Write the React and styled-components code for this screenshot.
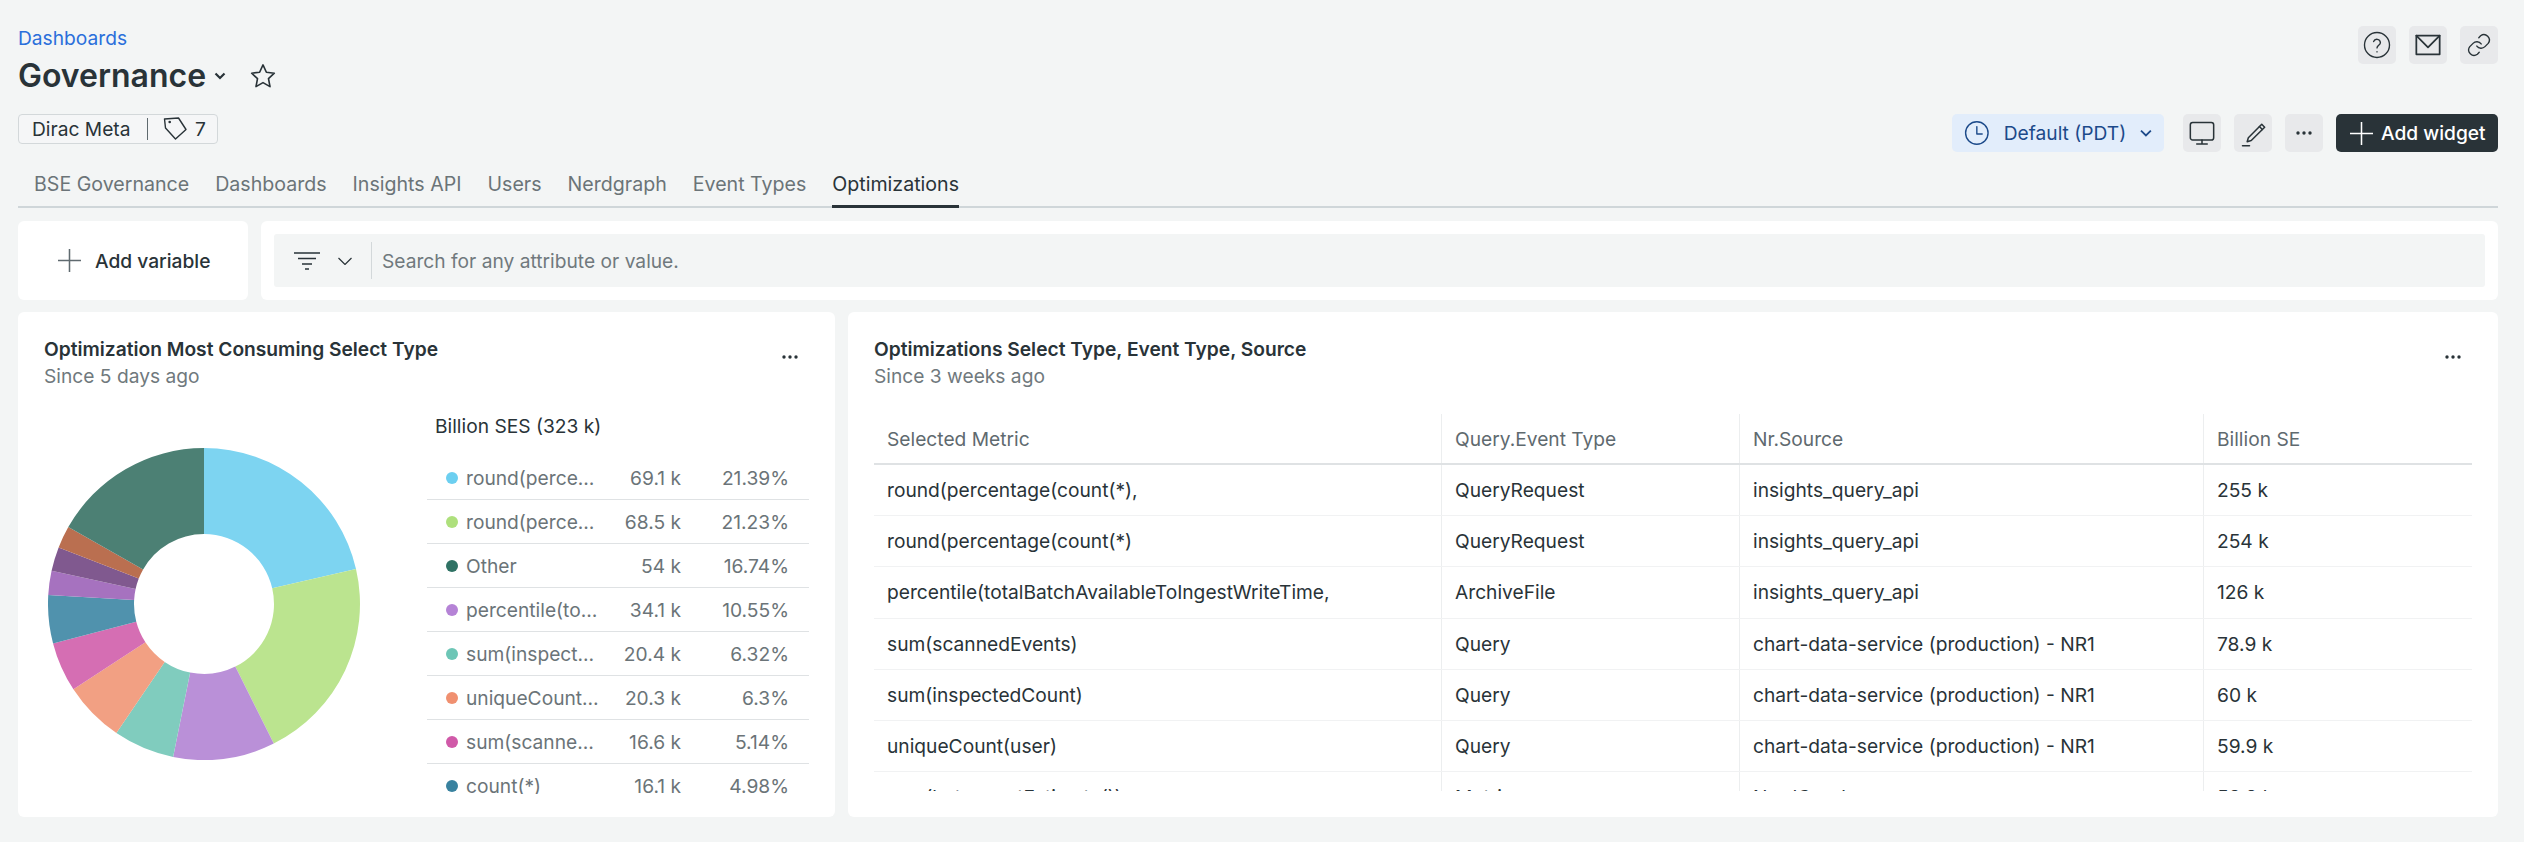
import React from "react";
import styled, { createGlobalStyle } from "styled-components";

const GlobalStyle = createGlobalStyle`
  html, body {
    margin: 0;
    background: #f3f5f5;
    color: #293338;
    font-family: Inter, "Noto Sans", sans-serif;
    font-size: 19.2px;
  }
  * {
    box-sizing: border-box;
  }
`;

const tabs = ["BSE Governance", "Dashboards", "Insights API", "Users", "Nerdgraph", "Event Types", "Optimizations"];

const slices = [
  { pct: 21.39, color: "#7dd4f1" },
  { pct: 21.23, color: "#bbe48f" },
  { pct: 10.55, color: "#ba90d8" },
  { pct: 6.32, color: "#80ccbe" },
  { pct: 6.3, color: "#f2a083" },
  { pct: 5.14, color: "#d56eb3" },
  { pct: 4.98, color: "#5092ad" },
  { pct: 2.5, color: "#a672bf" },
  { pct: 2.5, color: "#80598f" },
  { pct: 2.3, color: "#ba6f50" },
  { pct: 16.79, color: "#4c8074" },
];

const legend = [
  { name: "round(percentage(count(*),", value: "69.1 k", pct: "21.39%", color: "#6ccff0" },
  { name: "round(percentage(count(*))", value: "68.5 k", pct: "21.23%", color: "#aee07c" },
  { name: "Other", value: "54 k", pct: "16.74%", color: "#2f7264" },
  { name: "percentile(totalBatchAvailable", value: "34.1 k", pct: "10.55%", color: "#b583d6" },
  { name: "sum(inspectedCount)", value: "20.4 k", pct: "6.32%", color: "#6dc6b6" },
  { name: "uniqueCount(user)", value: "20.3 k", pct: "6.3%", color: "#f09070" },
  { name: "sum(scannedEvents)", value: "16.6 k", pct: "5.14%", color: "#d059a8" },
  { name: "count(*)", value: "16.1 k", pct: "4.98%", color: "#39829f" },
];

const columns = ["Selected Metric", "Query.Event Type", "Nr.Source", "Billion SE"];

const rows = [
  ["round(percentage(count(*),", "QueryRequest", "insights_query_api", "255 k"],
  ["round(percentage(count(*)", "QueryRequest", "insights_query_api", "254 k"],
  ["percentile(totalBatchAvailableToIngestWriteTime,", "ArchiveFile", "insights_query_api", "126 k"],
  ["sum(scannedEvents)", "Query", "chart-data-service (production) - NR1", "78.9 k"],
  ["sum(inspectedCount)", "Query", "chart-data-service (production) - NR1", "60 k"],
  ["uniqueCount(user)", "Query", "chart-data-service (production) - NR1", "59.9 k"],
  ["sum(bytecountEstimate())", "Metric", "NerdGraph", "53.9 k"],
];

function slicePath(start, end, cx, cy, r, inner) {
  const point = (pct, radius) => {
    const a = (pct / 100) * Math.PI * 2;
    return `${(cx + radius * Math.sin(a)).toFixed(2)} ${(cy - radius * Math.cos(a)).toFixed(2)}`;
  };
  const large = end - start > 50 ? 1 : 0;
  return `M${point(start, r)}A${r} ${r} 0 ${large} 1 ${point(end, r)}L${point(end, inner)}A${inner} ${inner} 0 ${large} 0 ${point(start, inner)}Z`;
}

function Donut() {
  let acc = 0;
  return (
    <DonutSvg viewBox="0 0 312 312">
      {slices.map((s) => {
        const d = slicePath(acc, acc + s.pct, 156, 156, 156, 70);
        acc += s.pct;
        return <path key={s.color} d={d} fill={s.color} />;
      })}
    </DonutSvg>
  );
}

const Icon = ({ size = 24, children, sw = 1.5 }) => (
  <svg width={size} height={size} viewBox="0 0 24 24" fill="none" stroke="currentColor" strokeWidth={sw} strokeLinecap="round" strokeLinejoin="round">
    {children}
  </svg>
);

const Dots = () => (
  <svg width="18" height="6" viewBox="0 0 18 6" fill="currentColor">
    <circle cx="3" cy="3" r="1.7" />
    <circle cx="9" cy="3" r="1.7" />
    <circle cx="15" cy="3" r="1.7" />
  </svg>
);

const Plus = ({ size = 23 }) => (
  <svg width={size} height={size} viewBox="0 0 24 24" stroke="currentColor" strokeWidth="1.6">
    <path d="M12 0v24M0 12h24" />
  </svg>
);

export default function App() {
  return (
    <Page>
      <GlobalStyle />
      <Header>
        <TitleBlock>
          <Crumb>Dashboards</Crumb>
          <TitleRow>
            <Title>Governance</Title>
            <svg width="12" height="8" viewBox="0 0 12 8" fill="none" stroke="#293338" strokeWidth="2.2">
              <path d="M1.5 1.5 6 6l4.500-4.500" />
            </svg>
            <StarWrap>
              <Icon size={28} sw={1.4}>
                <path d="M12 2.500l2.900 6.300 6.800.8-5 4.700 1.300 6.800-6-3.400-6 3.400 1.300-6.800-5-4.700 6.800-.8z" />
              </Icon>
            </StarWrap>
          </TitleRow>
          <TagChip>
            <span>Dirac Meta</span>
            <ChipDivider />
            <svg width="24" height="24" viewBox="0 0 24 24" fill="none" stroke="#293338" strokeWidth="1.4" strokeLinejoin="round">
              <path d="M1.500 2L15.500 1L23 12.500L12.500 22L2.500 11Z" />
              <circle cx="6.700" cy="5" r="0.6" fill="#293338" />
            </svg>
            <span>7</span>
          </TagChip>
        </TitleBlock>
        <Actions>
          <ActionRow>
            <ChipButton>
              <Icon size={30} sw={1.1}>
                <circle cx="12" cy="12" r="10" />
                <path d="M9.300 9.200a2.800 2.800 0 0 1 5.400.9c0 1.900-2.700 2.300-2.700 4.200" />
                <path d="M12 17.300v.2" />
              </Icon>
            </ChipButton>
            <ChipButton>
              <Icon size={28} sw={1.5}>
                <path d="M2 4h20v16H2z" />
                <path d="M2 4l10 10L22 4" />
              </Icon>
            </ChipButton>
            <ChipButton>
              <Icon size={26} sw={1.3}>
                <path d="M10 13a5 5 0 0 0 7.500.5l3-3a5 5 0 0 0-7-7l-1.700 1.700" />
                <path d="M14 11a5 5 0 0 0-7.500-.5l-3 3a5 5 0 0 0 7 7l1.700-1.700" />
              </Icon>
            </ChipButton>
          </ActionRow>
          <ActionRow>
            <TimeButton>
              <Icon size={26} sw={1.3}>
                <circle cx="12" cy="12" r="10.500" />
                <path d="M12 6v7h5" />
              </Icon>
              <span>Default (PDT)</span>
              <svg width="12" height="8" viewBox="0 0 12 8" fill="none" stroke="currentColor" strokeWidth="1.8">
                <path d="M1 1.500 6 6.500l5-5" />
              </svg>
            </TimeButton>
            <ChipButton>
              <Icon size={28} sw={1.3}>
                <rect x="2" y="3" width="20" height="15" rx="2" />
                <path d="M12 18v3.500M7.500 21.500h9" />
              </Icon>
            </ChipButton>
            <ChipButton>
              <Icon size={28} sw={1.3}>
                <path d="M8 16l-1 3.500 3.500-1L22 7l-2.500-2.500z" />
                <path d="M17.500 6.500 20 9" />
                <path d="M3 23h6" />
              </Icon>
            </ChipButton>
            <ChipButton>
              <Dots />
            </ChipButton>
            <AddWidget>
              <Plus />
              <span>Add widget</span>
            </AddWidget>
          </ActionRow>
        </Actions>
      </Header>

      <TabBar>
        {tabs.map((t) => (
          <Tab key={t} $active={t === "Optimizations"}>
            {t}
          </Tab>
        ))}
      </TabBar>

      <FilterRow>
        <AddVariable>
          <Plus />
          <span>Add variable</span>
        </AddVariable>
        <FilterPanel>
          <SearchBar>
            <svg width="26" height="18" viewBox="0 0 26 18" stroke="#293338" strokeWidth="1.5" fill="none">
              <path d="M0 1h26M4 6.500h18M8 12h10M11 17h4" />
            </svg>
            <svg width="14" height="8" viewBox="0 0 14 8" stroke="#293338" strokeWidth="1.2" fill="none">
              <path d="M.5 1l6.500 6.500L13.500 1" />
            </svg>
            <SearchDivider />
            <SearchText>Search for any attribute or value.</SearchText>
          </SearchBar>
        </FilterPanel>
      </FilterRow>

      <Cards>
        <Card>
          <CardHeader>
            <div>
              <CardTitle>Optimization Most Consuming Select Type</CardTitle>
              <CardSub>Since 5 days ago</CardSub>
            </div>
            <Dots />
          </CardHeader>
          <ChartBody>
            <Donut />
            <Legend>
              <LegendTitle>Billion SES (323 k)</LegendTitle>
              {legend.map((l) => (
                <LegendRow key={l.pct}>
                  <LegendDot $color={l.color} />
                  <LegendName>{l.name}</LegendName>
                  <LegendValue>{l.value}</LegendValue>
                  <LegendValue>{l.pct}</LegendValue>
                </LegendRow>
              ))}
            </Legend>
          </ChartBody>
        </Card>
        <Card>
          <CardHeader>
            <div>
              <CardTitle>Optimizations Select Type, Event Type, Source</CardTitle>
              <CardSub>Since 3 weeks ago</CardSub>
            </div>
            <Dots />
          </CardHeader>
          <TableClip>
            <HeadRow>
              {columns.map((c) => (
                <HeadCell key={c}>{c}</HeadCell>
              ))}
            </HeadRow>
            {rows.map((r) => (
              <BodyRow key={r[0]}>
                {r.map((cell, i) => (
                  <BodyCell key={i}>{cell}</BodyCell>
                ))}
              </BodyRow>
            ))}
          </TableClip>
        </Card>
      </Cards>
    </Page>
  );
}

const Page = styled.div`
  width: 2524px;
  height: 842px;
  padding: 26px 26px 0 18px;
  overflow: hidden;
`;

const Header = styled.header`
  display: flex;
  justify-content: space-between;
  height: 118px;
`;

const TitleBlock = styled.div`
  display: flex;
  flex-direction: column;
  align-items: flex-start;
  padding-top: 2px;
`;

const Crumb = styled.a`
  color: #2a6fdb;
  line-height: 20px;
`;

const TitleRow = styled.div`
  display: flex;
  align-items: center;
  margin-top: 8px;
  height: 40px;
  gap: 8px;
`;

const Title = styled.h1`
  margin: 0;
  font-size: 32px;
  line-height: 40px;
  font-weight: 600;
  color: #293338;
`;

const StarWrap = styled.span`
  display: inline-flex;
  margin-left: 15px;
`;

const TagChip = styled.div`
  display: flex;
  align-items: center;
  gap: 8px;
  margin-top: 18px;
  height: 30px;
  padding: 0 11px 0 13px;
  background: #f5f6f7;
  border: 1px solid #d3d8da;
  border-radius: 4px;
`;

const ChipDivider = styled.span`
  width: 1.500px;
  height: 22px;
  margin: 0 7px 0 8px;
  background: #5f6a6f;
`;

const Actions = styled.div`
  display: flex;
  flex-direction: column;
  align-items: flex-end;
  gap: 50px;
`;

const ActionRow = styled.div`
  display: flex;
  align-items: center;
  gap: 13px;
`;

const ChipButton = styled.button`
  display: flex;
  align-items: center;
  justify-content: center;
  width: 38px;
  height: 38px;
  padding: 0;
  border: 0;
  border-radius: 5px;
  background: #e8e9eb;
  color: #293338;
`;

const TimeButton = styled.button`
  display: flex;
  align-items: center;
  width: 212px;
  height: 38px;
  margin-right: 6px;
  padding: 0 12px;
  gap: 14px;
  border: 0;
  border-radius: 5px;
  background: #e2edfb;
  color: #1c4a8a;
  font: 400 19.2px Inter, sans-serif;
  white-space: nowrap;
`;

const AddWidget = styled.button`
  display: flex;
  align-items: center;
  height: 38px;
  width: 162px;
  padding: 0 0 0 14px;
  gap: 8px;
  border: 0;
  border-radius: 5px;
  background: #293338;
  color: #fff;
  font: 500 19.2px Inter, sans-serif;
  white-space: nowrap;
`;

const TabBar = styled.nav`
  display: flex;
  gap: 26px;
  margin-top: 16px;
  height: 48px;
  padding-left: 16px;
  border-bottom: 2px solid #cfd6d9;
`;

const Tab = styled.a`
  height: 48px;
  padding-top: 13px;
  line-height: 22px;
  font-size: 19.6px;
  color: ${({ $active }) => ($active ? "#293338" : "#6b7478")};
  border-bottom: ${({ $active }) => ($active ? "3px solid #293338" : "0")};
`;

const FilterRow = styled.div`
  display: flex;
  gap: 13px;
  margin-top: 13px;
  height: 79px;
`;

const AddVariable = styled.button`
  display: flex;
  align-items: center;
  width: 230px;
  padding: 0 0 0 40px;
  gap: 14px;
  border: 0;
  border-radius: 6px;
  background: #fff;
  color: #293338;
  font: 500 19.2px Inter, sans-serif;
  svg {
    color: #5f6a6f;
  }
`;

const FilterPanel = styled.div`
  flex: 1;
  padding: 13px;
  border-radius: 6px;
  background: #fff;
`;

const SearchBar = styled.div`
  display: flex;
  align-items: center;
  height: 53px;
  padding-left: 20px;
  border-radius: 3px;
  background: #f3f5f5;
  svg:nth-child(2) {
    margin-left: 18px;
  }
`;

const SearchDivider = styled.span`
  width: 1px;
  height: 37px;
  margin: 0 10px 0 19px;
  background: #d3d8da;
`;

const SearchText = styled.span`
  color: #70797d;
`;

const Cards = styled.div`
  display: grid;
  grid-template-columns: 817px 1650px;
  gap: 13px;
  margin-top: 12px;
`;

const Card = styled.section`
  height: 505px;
  padding: 26px 26px 0;
  border-radius: 6px;
  background: #fff;
`;

const CardHeader = styled.div`
  display: flex;
  justify-content: space-between;
  align-items: flex-start;
  height: 50px;
  margin-bottom: 26px;
  svg {
    margin: 16px 10px 0 0;
  }
`;

const CardTitle = styled.h2`
  margin: 0;
  font-size: 19.2px;
  line-height: 22px;
  font-weight: 600;
`;

const CardSub = styled.div`
  margin-top: 4px;
  line-height: 24px;
  color: #70797d;
`;

const ChartBody = styled.div`
  display: flex;
  align-items: center;
  justify-content: space-between;
  height: 379px;
`;

const DonutSvg = styled.svg`
  width: 312px;
  height: 312px;
  margin-left: 3.500px;
`;

const Legend = styled.div`
  align-self: flex-start;
  width: 382px;
  height: 380px;
  overflow: hidden;
`;

const LegendTitle = styled.div`
  padding-left: 8px;
  height: 42.300px;
  line-height: 24px;
`;

const LegendRow = styled.div`
  display: grid;
  grid-template-columns: 12px 136px 71px 100px;
  column-gap: 8px;
  align-items: center;
  height: 44px;
  padding-left: 19px;
  border-bottom: 1px solid #dfe2e4;
  color: #6b7478;
`;

const LegendDot = styled.span`
  width: 12px;
  height: 12px;
  border-radius: 50%;
  background: ${({ $color }) => $color};
`;

const LegendName = styled.span`
  overflow: hidden;
  white-space: nowrap;
  text-overflow: ellipsis;
`;

const LegendValue = styled.span`
  text-align: right;
`;

const TableClip = styled.div`
  height: 377px;
  overflow: hidden;
`;

const HeadRow = styled.div`
  display: grid;
  grid-template-columns: 567px 298px 464px 1fr;
  height: 51px;
  border-bottom: 2px solid #dfe2e4;
`;

const BodyRow = styled(HeadRow)`
  height: 51.200px;
  border-bottom: 1px solid #f1f2f3;
`;

const HeadCell = styled.div`
  display: flex;
  align-items: center;
  padding-left: 13px;
  color: #5f6a6f;
  white-space: nowrap;
  &:not(:first-child) {
    border-left: 1px solid #eceeef;
  }
`;

const BodyCell = styled(HeadCell)`
  color: #293338;
`;
